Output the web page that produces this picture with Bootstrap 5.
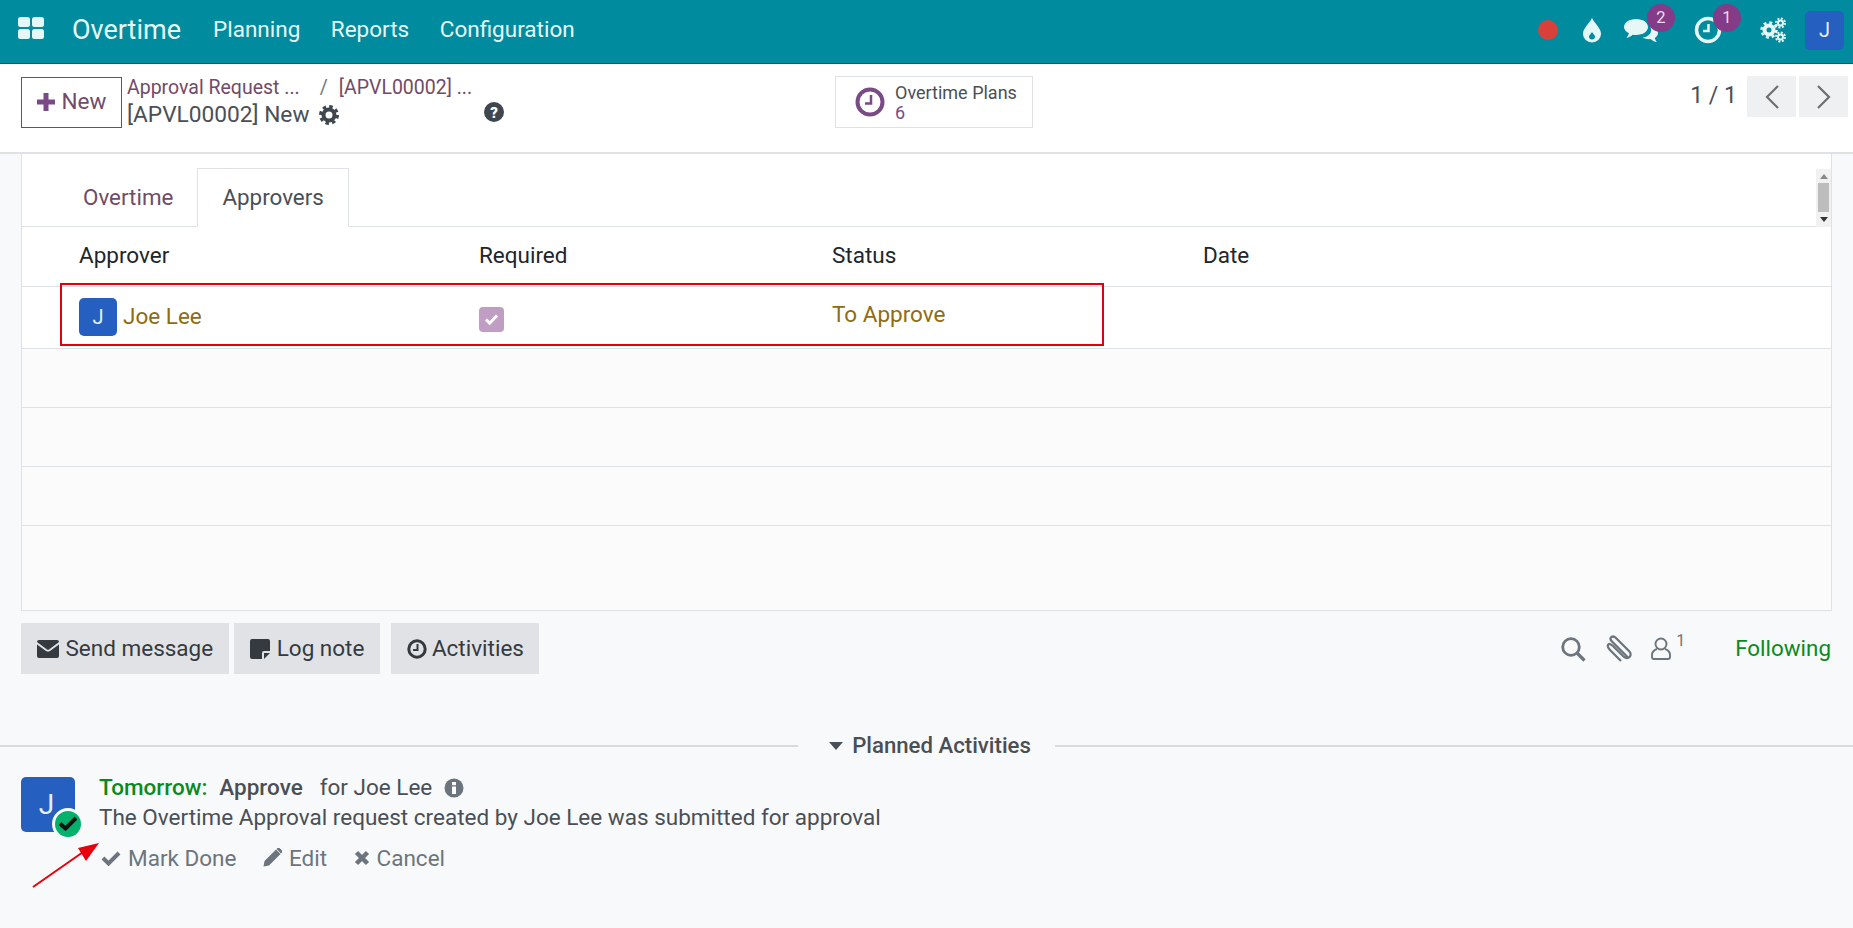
<!DOCTYPE html>
<html lang="en">
<head>
<meta charset="utf-8">
<title>Overtime</title>
<link href="https://cdn.jsdelivr.net/npm/bootstrap@5.3.0/dist/css/bootstrap.min.css" rel="stylesheet">
<style>
html,body{height:100%;overflow:hidden}
body{font-family:Roboto,"Liberation Sans",sans-serif;font-size:22.5px;color:#4a4f55;background:#f8f9fa;width:1853px;height:928px}
.topbar{height:64px;background:#008b9e;border-bottom:1px solid #06606c;padding:0 9px 3px 18px;color:#e6f7f8}
.apps{width:26px;height:22px;margin-right:28px;margin-top:-4px}
.brandname{font-size:27px;color:#e6f7f8;margin-right:32px}
.menuit{font-size:22.5px;color:#e6f7f8;margin-right:30.500px;text-decoration:none}
.rdot{width:20px;height:20px;border-radius:50%;background:#d9403a;margin-right:24px}
.sysicon{position:relative;display:flex;align-items:center;justify-content:center}
.ic-drop{margin-right:13px}
.ic-chat{width:52px;height:30px;margin-right:20px}
.ic-clock{width:44px;height:30px;margin-right:29px}
.ic-gear{margin-right:19px}
.cnt{position:absolute;width:28px;height:28px;border-radius:50%;background:#843c88;color:#e9dcec;font-size:16.5px;line-height:27px;text-align:center}
.cnt-a{left:32px;top:-11px}
.cnt-b{left:26px;top:-11px}
.uava{width:39px;height:39px;border-radius:5px;background:#2560c0;color:#e6f0fa;font-size:20px;line-height:39px;text-align:center}
.cpanel{height:90px;background:#fff;border-bottom:2px solid #dee2e6;padding:12px 5px 0 21px}
.newbtn{width:101px;height:51px;border:1px solid #714b67;border-radius:0;color:#714b67;font-size:22.5px;background:#fff;padding:0 0 2px;display:flex;align-items:center;justify-content:center;gap:7px;margin-top:1px}
.crumbs{margin-left:5px;width:410px}
.crumb1{font-size:19.5px;color:#714b67;line-height:23px;height:23px}
.crumb2{font-size:22.7px;color:#4a4f55;line-height:30px;height:30px;margin-top:1px}
.sep{color:#6c757d;margin:0 11px 0 20px}
.ic-cog{margin-left:10px}
.ic-help{margin-left:145px;margin-top:-6px}
.statbtn{position:absolute;left:835px;top:12px;width:198px;height:52px;border:1px solid #dee2e6;background:#fff;display:flex;align-items:center;padding-left:19px;gap:10px}
.stattxt{font-size:18px;line-height:20px;color:#4a4f55;padding-top:2px}
.statval{color:#7a4a86}
.pagertxt{font-size:23px;color:#4a4f55;margin-right:7px;margin-top:0}
.pgbtn{width:49px;height:41px;background:#eff0f1;border:0;border-radius:0;padding:0;display:flex;align-items:center;justify-content:center;margin-left:3px}
.sheet{height:457px;margin:0 21px;background:#fff;border:1px solid #dee2e6;border-top:0;position:relative}
.tabbar{height:73px;padding-top:14px;position:relative}
.tabbar .nav-tabs{padding-left:37px}
.tabbar .nav-link{font-size:22.4px;height:59px;border-radius:0;padding:13px 24px;color:#714b67}
.tabbar .nav-link.active{color:#4a4f55;border-color:#dee2e6 #dee2e6 #fff;padding-top:12px}
.sbar{position:absolute;right:0;top:15px;width:15px;height:58px;background:#f1f1f1;display:flex;flex-direction:column;align-items:center;justify-content:space-between;padding:5px 0}
.sthumb{width:11px;height:29px;background:#bdbdbd;margin-top:-1px}
.tri-up{width:0;height:0;border:4px solid transparent;border-top:0;border-bottom:5px solid #888}
.tri-dn{width:0;height:0;border:4px solid transparent;border-bottom:0;border-top:5px solid #333}
.linegrid{width:100%;table-layout:fixed;margin:0;--bs-table-bg:transparent;font-size:22.5px}
.linegrid th{font-weight:400;color:#212529;height:59px;padding:0;vertical-align:middle;border-bottom:1px solid #dee2e6}
.linegrid td{padding:0;vertical-align:middle;height:59px;background:#fbfbfb;border-bottom:1px solid #dee2e6}
.linegrid tr.filled td{height:62px;background:#fff;color:#8f6b12}
.linegrid tr:last-child td{border-bottom:0;height:85px}
.c1{width:57px}.c2{width:400px}.c3{width:353px}.c4{width:371px}
.rava{width:38px;height:38px;border-radius:5px;background:#2560c0;color:#e6f0fa;font-size:20px;line-height:38px;text-align:center;margin-right:6px}
.ck{width:25px;height:25px;border-radius:4px;background:#c09dc2;display:flex;align-items:center;justify-content:center;margin-top:4px}
.stat-txt{position:relative;top:-2px}
.redbox{position:absolute;left:38px;top:129px;width:1044px;height:63px;border:2px solid #e0000f;pointer-events:none}
.chatter{padding:12px 22px 0 21px;height:122px}
.chbtn{height:51px;background:#e0e2e6;border:0;border-radius:0;color:#343a40;font-size:22.5px;padding:0 15.500px;display:flex;align-items:center;gap:7px}
.chbtn:hover{background:#e0e2e6}
.chbtn-log{margin-left:5.500px;padding-right:16px}
.chbtn-act{margin-left:11px;gap:5px}
.ic-clip{margin-left:20px}
.ic-user{margin-left:19px}
.following{color:#0a8a1e;font-size:22.4px;margin-left:50px}
.flwcnt{font-size:16px;color:#6c757d;position:relative;top:-8px;margin-left:5px}
.sepwrap{height:28px;margin-top:-1px}
.sepline{height:2px;background:#d8dadd;flex:1}
.sephd{font-weight:500;font-size:22.2px;color:#4a4f55;padding:0 24px 0 31px;display:flex;align-items:center;gap:9px}
.activity{padding:16.500px 21px 0;position:relative}
.aava{width:54px;height:55px;border-radius:5px;background:#2560c0;color:#e6f0fa;font-size:28px;line-height:55px;text-align:center;position:relative;padding-right:3px;margin-right:24px;flex:none}
.okb{position:absolute;left:31px;top:31px;width:32px;height:32px;border-radius:50%;background:#00b26b;border:3px solid #f8f9fa;display:flex;align-items:center;justify-content:center}
.l1{line-height:29px;height:28px;margin-top:-3px}
.due{color:#0a8a1e;font-weight:500}
.actname{font-weight:500;margin:0 17px 0 12px}
.ic-info{margin-left:12px}
.l2{line-height:30px;height:30px}
.l3{margin-top:9px;margin-left:2px;color:#6c757d;line-height:34px;gap:26.500px}
.l3 span{gap:7px}
.arrowmark{position:absolute;left:26px;top:835px;pointer-events:none}
</style>
</head>
<body>
<nav class="navbar topbar d-flex flex-nowrap align-items-center justify-content-start">
  <svg class="apps" viewBox="0 0 26 22"><g fill="#e6f7f8"><rect x="0" y="0" width="12" height="10" rx="2.5"/><rect x="14" y="0" width="12" height="10" rx="2.5"/><rect x="0" y="12" width="12" height="10" rx="2.5"/><rect x="14" y="12" width="12" height="10" rx="2.5"/></g></svg>
  <span class="brandname">Overtime</span>
  <a class="menuit" href="#">Planning</a>
  <a class="menuit" href="#">Reports</a>
  <a class="menuit" href="#">Configuration</a>
  <div class="ms-auto d-flex align-items-center">
    <span class="rdot"></span>
    <span class="sysicon ic-drop"><svg width="20" height="26" viewBox="0 0 20 26"><path fill="#e6f7f8" d="M10 1C7 7 1 11 1 17a9 8.500 0 0 0 18 0C19 11 13 7 10 1z"/><path fill="#008b9e" d="M10 15c-1 2-3 3-3 4.500a3 3 0 0 0 6 0C13 18 11 17 10 15z"/></svg></span>
    <span class="sysicon ic-chat"><svg width="34" height="28" viewBox="0 0 34 28"><path fill="#e6f7f8" d="M12 3c7 0 12 3.600 12 8s-5 8-12 8c-1.200 0-2.300-.1-3.400-.3C7 20.500 4.500 21.500 2.500 21.800c1-1.200 2-2.800 2.400-4.500C2 15.800 0 13.500 0 11c0-4.400 5.400-8 12-8z"/><path fill="#e6f7f8" d="M26 10c4 1 8 3 8 7 0 2-1.200 3.800-3.200 5 .3 1.500 1.200 3 2.200 4-2.500-.2-5-1.500-6.500-3-1.500.3-5 .3-8-1.500 6-.5 11-5 7.500-11.500z"/></svg><span class="cnt cnt-a">2</span></span>
    <span class="sysicon ic-clock"><svg width="30" height="30" viewBox="0 0 30 30"><circle cx="14" cy="15" r="11.500" fill="none" stroke="#e6f7f8" stroke-width="3.500"/><path d="M14.500 9v7H9" fill="none" stroke="#e6f7f8" stroke-width="2.500"/></svg><span class="cnt cnt-b">1</span></span>
    <span class="sysicon ic-gear"><svg width="26" height="26" viewBox="0 0 26 26"><g fill="none" stroke="#e6f7f8"><circle cx="9" cy="13" r="4.500" stroke-width="4"/><circle cx="9" cy="13" r="7.500" stroke-width="2.500" stroke-dasharray="3 2.900"/><circle cx="20.500" cy="6" r="2.500" stroke-width="2"/><circle cx="20.500" cy="6" r="4.500" stroke-width="2" stroke-dasharray="2 1.500"/><circle cx="20.500" cy="20" r="2.500" stroke-width="2"/><circle cx="20.500" cy="20" r="4.500" stroke-width="2" stroke-dasharray="2 1.500"/></g></svg></span>
    <span class="uava">J</span>
  </div>
</nav>

<div class="cpanel d-flex align-items-start position-relative">
  <button class="btn newbtn" type="button"><svg width="18" height="18" viewBox="0 0 18 18"><path fill="#7a4a86" d="M6.500 0h5v6.500H18v5h-6.500V18h-5v-6.500H0v-5h6.500z"/></svg>New</button>
  <div class="crumbs">
    <div class="crumb1 text-nowrap">Approval Request ...<span class="sep">/</span>[APVL00002] ...</div>
    <div class="crumb2 d-flex align-items-center">[APVL00002] New
      <svg class="ic-cog" width="20" height="20" viewBox="0 0 20 20"><circle cx="10" cy="10" r="5.500" fill="none" stroke="#3f464e" stroke-width="4"/><circle cx="10" cy="10" r="8.500" fill="none" stroke="#3f464e" stroke-width="3" stroke-dasharray="3.500 3.170"/></svg>
      <svg class="ic-help" width="20" height="20" viewBox="0 0 20 20"><circle cx="10" cy="10" r="10" fill="#3f464e"/><text x="10" y="15.500" text-anchor="middle" font-size="15" font-weight="900" fill="#fff" font-family="Roboto">?</text></svg>
    </div>
  </div>
  <div class="statbtn">
    <svg width="30" height="30" viewBox="0 0 30 30"><circle cx="15" cy="15" r="12.500" fill="none" stroke="#7a4a86" stroke-width="4"/><path d="M16 8v8.500H10" fill="none" stroke="#7a4a86" stroke-width="2.500"/></svg>
    <div class="stattxt">Overtime Plans<br><span class="statval">6</span></div>
  </div>
  <div class="ms-auto d-flex align-items-center">
    <span class="pagertxt">1 / 1</span>
    <button class="btn pgbtn" type="button"><svg width="16" height="26" viewBox="0 0 16 26"><path d="M14 2 3 13l11 11" fill="none" stroke="#6c7075" stroke-width="2.200"/></svg></button>
    <button class="btn pgbtn" type="button"><svg width="16" height="26" viewBox="0 0 16 26"><path d="m2 2 11 11L2 24" fill="none" stroke="#6c7075" stroke-width="2.200"/></svg></button>
  </div>
</div>

<div class="sheet">
  <div class="tabbar">
    <ul class="nav nav-tabs">
      <li class="nav-item"><a class="nav-link border-0" href="#">Overtime</a></li>
      <li class="nav-item"><a class="nav-link active" href="#">Approvers</a></li>
    </ul>
    <div class="sbar"><span class="tri-up"></span><span class="sthumb"></span><span class="tri-dn"></span></div>
  </div>
  <table class="table linegrid">
    <thead><tr><th class="c1"></th><th class="c2">Approver</th><th class="c3">Required</th><th class="c4">Status</th><th>Date</th></tr></thead>
    <tbody>
      <tr class="filled"><td></td><td><div class="d-flex align-items-center"><span class="rava">J</span>Joe Lee</div></td><td><span class="ck"><svg width="15" height="13" viewBox="0 0 15 13"><path d="m2 6.500 3.700 3.700L13 2.500" fill="none" stroke="#fff" stroke-width="3"/></svg></span></td><td><span class="stat-txt">To Approve</span></td><td></td></tr>
      <tr><td colspan="5"></td></tr>
      <tr><td colspan="5"></td></tr>
      <tr><td colspan="5"></td></tr>
      <tr><td colspan="5"></td></tr>
    </tbody>
  </table>
  <div class="redbox"></div>
</div>

<div class="chatter d-flex align-items-start">
  <button class="btn chbtn" type="button"><svg width="22" height="18" viewBox="0 0 22 18"><path fill="#343a40" d="M0 4.500V16a2 2 0 0 0 2 2h18a2 2 0 0 0 2-2V4.500l-9 6.500c-1.200.8-2.800.8-4 0z"/><path fill="#343a40" d="M2 0h18a2 2 0 0 1 2 2l-10 7.500a2 2 0 0 1-2 0L0 2a2 2 0 0 1 2-2z"/></svg>Send message</button>
  <button class="btn chbtn chbtn-log" type="button"><svg width="20" height="20" viewBox="0 0 20 20"><path fill="#343a40" d="M2 0h16a2 2 0 0 1 2 2v10h-6a2 2 0 0 0-2 2v6H2a2 2 0 0 1-2-2V2a2 2 0 0 1 2-2z"/><path fill="#343a40" d="M14 14h6l-6 6z"/></svg>Log note</button>
  <button class="btn chbtn chbtn-act" type="button"><svg width="20" height="20" viewBox="0 0 20 20"><circle cx="10" cy="10" r="8.200" fill="none" stroke="#343a40" stroke-width="3"/><path d="M10.500 5v6H6" fill="none" stroke="#343a40" stroke-width="2"/></svg>Activities</button>
  <div class="ms-auto d-flex align-items-center" style="height:51px">
    <svg width="26" height="26" viewBox="0 0 26 26"><circle cx="11" cy="11" r="8.300" fill="none" stroke="#6c757d" stroke-width="2.800"/><path d="m17 17 7.500 7.500" stroke="#6c757d" stroke-width="3.200"/></svg>
    <svg class="ic-clip" width="26" height="28" viewBox="0 0 26 28"><path d="M23 23.500 6 6.500C4 4.500 4 3 5.500 2s3-.5 4.500 1l13 13c2 2 2 4.500.5 6s-4 1.500-6-.5L7.500 11.500C5.500 9.500 3 8 2 10s.5 3.500 2 5l11 11" fill="none" stroke="#6c757d" stroke-width="2.300"/></svg>
    <svg class="ic-user" width="20" height="23" viewBox="0 0 20 23"><circle cx="10" cy="7" r="5.500" fill="none" stroke="#6c757d" stroke-width="1.900"/><path d="M6 12c-3 1-5 3-5 6v2c0 1 1 2 2 2h14c1 0 2-1 2-2v-2c0-3-2-5-5-6" fill="none" stroke="#6c757d" stroke-width="1.900"/></svg>
    <span class="flwcnt">1</span>
    <span class="following">Following</span>
  </div>
</div>

<div class="sepwrap d-flex align-items-center">
  <span class="sepline"></span>
  <span class="sephd"><svg width="14" height="8" viewBox="0 0 14 8"><path fill="#4a4f55" d="M0 0h14L7 8z"/></svg>Planned Activities</span>
  <span class="sepline"></span>
</div>

<div class="activity d-flex">
  <div class="aava">J<span class="okb"><svg width="20" height="15" viewBox="0 0 20 15"><path d="m2 7.500 5.500 5L18 2" fill="none" stroke="#111" stroke-width="4"/></svg></span></div>
  <div class="flex-grow-1">
    <div class="l1 d-flex align-items-center"><span class="due">Tomorrow:</span><span class="actname">Approve</span>for Joe Lee<svg class="ic-info" width="20" height="20" viewBox="0 0 20 20"><circle cx="10" cy="10" r="9.500" fill="#6c757d"/><rect x="8" y="8.500" width="4" height="7.500" fill="#fff"/><rect x="8" y="4" width="4" height="3.200" fill="#fff"/></svg></div>
    <div class="l2">The Overtime Approval request created by Joe Lee was submitted for approval</div>
    <div class="l3 d-flex">
      <span class="d-flex align-items-center"><svg width="20" height="16" viewBox="0 0 20 16"><path d="m2 8 5.500 5.500L18 3" fill="none" stroke="#6c757d" stroke-width="4"/></svg>Mark Done</span>
      <span class="d-flex align-items-center"><svg width="19" height="19" viewBox="0 0 19 19"><path fill="#6c757d" d="M13 1.500l4.500 4.500L6 17.500l-5.500 1 1-5.500zM14.500 0a1.500 1.500 0 0 1 2 0l2.500 2.500a1.500 1.500 0 0 1 0 2L18 5.500 13.500 1z"/></svg>Edit</span>
      <span class="d-flex align-items-center"><svg width="16" height="16" viewBox="0 0 16 16"><path d="m2.500 2.500 11 11m0-11-11 11" stroke="#6c757d" stroke-width="4.500"/></svg>Cancel</span>
    </div>
  </div>
</div>

<svg class="arrowmark" width="80" height="60" viewBox="0 0 80 60"><path d="M7 52 60 15" stroke="#e8000c" stroke-width="2"/><path d="M73 8 52 13 60 26z" fill="#e8000c"/></svg>
<script src="https://cdn.jsdelivr.net/npm/bootstrap@5.3.0/dist/js/bootstrap.bundle.min.js"></script>
</body>
</html>
